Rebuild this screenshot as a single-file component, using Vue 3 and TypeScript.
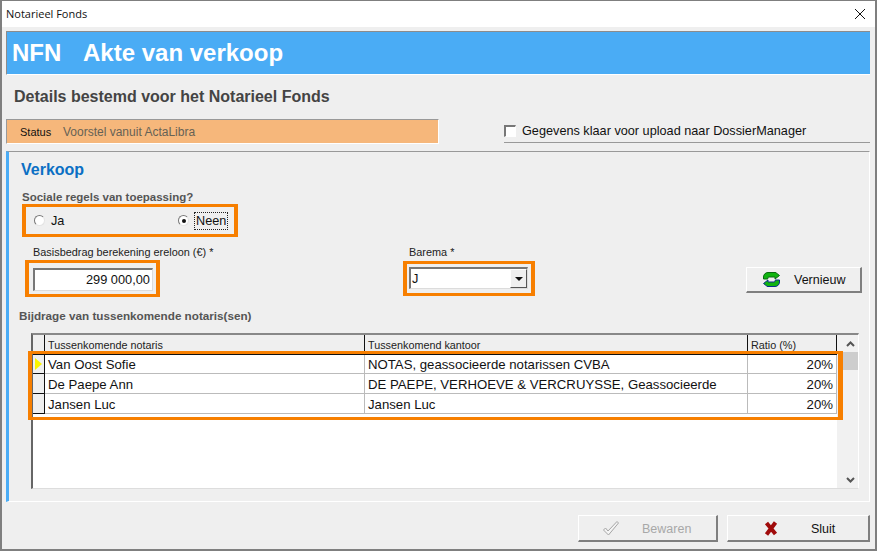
<script setup lang="ts">
interface Row {
  notaris: string
  kantoor: string
  ratio: string
  current?: boolean
}

const rows: Row[] = [
  { notaris: 'Van Oost Sofie', kantoor: 'NOTAS, geassocieerde notarissen CVBA', ratio: '20%', current: true },
  { notaris: 'De Paepe Ann', kantoor: 'DE PAEPE, VERHOEVE & VERCRUYSSE, Geassocieerde', ratio: '20%' },
  { notaris: 'Jansen Luc', kantoor: 'Jansen Luc', ratio: '20%' }
]
</script>

<template>
  <div class="window">
    <div class="titlebar">
      <span>Notarieel Fonds</span>
      <svg class="close" width="10" height="10" viewBox="0 0 10 10">
        <path d="M0 0L10 10M10 0L0 10" stroke="#111" stroke-width="1" fill="none" />
      </svg>
    </div>

    <div class="content">
      <div class="banner">
        <span class="banner-code">NFN</span>
        <span>Akte van verkoop</span>
      </div>

      <h2 class="subtitle">Details bestemd voor het Notarieel Fonds</h2>

      <div class="status-row">
        <div class="status">
          <span class="status-label">Status</span>
          <span class="status-value">Voorstel vanuit ActaLibra</span>
        </div>
        <div class="upload">
          <span class="checkbox"></span>
          <span>Gegevens klaar voor upload naar DossierManager</span>
        </div>
      </div>

      <section class="panel">
        <h3 class="panel-title">Verkoop</h3>
        <div class="field-label social-label">Sociale regels van toepassing?</div>
        <div class="mark radios">
          <label class="radio">
            <span class="radio-dot"></span>
            <span>Ja</span>
          </label>
          <label class="radio radio-neen">
            <span class="radio-dot checked"></span>
            <span class="focused">Neen</span>
          </label>
        </div>

        <div class="form-row">
          <div class="amount-col">
            <div class="small-label">Basisbedrag berekening ereloon (€) *</div>
            <div class="mark amount-mark">
              <div class="input amount">299 000,00</div>
            </div>
          </div>
          <div class="barema-col">
            <div class="small-label">Barema *</div>
            <div class="mark barema-mark">
              <div class="input select">
                <span class="select-value">J</span>
                <span class="select-btn"><i class="caret"></i></span>
              </div>
            </div>
          </div>
          <button class="btn btn-refresh">
            <svg width="17" height="15" viewBox="0 0 17 15">
              <path d="M0.500 7V5C0.500 2.500 2.500 0.500 5 0.500H12V0L16.500 3.500L12 7V5H6C5.200 5 4.800 5.500 4.800 6.200V7Z" fill="#10b410" stroke="#096a12" stroke-width="1" />
              <path d="M16.500 8V10C16.500 12.500 14.500 14.500 12 14.500H5V15L0.500 11.500L5 8V10H11C11.800 10 12.200 9.500 12.200 8.800V8Z" fill="#10b410" stroke="#0a2f8a" stroke-width="1" />
            </svg>
            <span>Vernieuw</span>
          </button>
        </div>

        <div class="field-label grid-label">Bijdrage van tussenkomende notaris(sen)</div>

        <div class="grid">
          <div class="grid-main">
            <div class="grid-row grid-head">
              <div class="cell indicator"></div>
              <div class="cell col-notaris">Tussenkomende notaris</div>
              <div class="cell col-kantoor">Tussenkomend kantoor</div>
              <div class="cell col-ratio">Ratio (%)</div>
            </div>
            <div class="grid-body">
              <div v-for="row in rows" :key="row.notaris" class="grid-row">
                <div class="cell indicator">
                  <i v-if="row.current" class="arrow"></i>
                </div>
                <div class="cell col-notaris">{{ row.notaris }}</div>
                <div class="cell col-kantoor">{{ row.kantoor }}</div>
                <div class="cell col-ratio num">{{ row.ratio }}</div>
              </div>
              <div class="rows-mark"></div>
            </div>
          </div>
          <div class="scrollbar">
            <svg width="9" height="6" viewBox="0 0 9 6"><path d="M1 5L4.500 1.500L8 5" stroke="#555" stroke-width="2" fill="none" /></svg>
            <div class="thumb"></div>
            <div class="track"></div>
            <svg width="9" height="6" viewBox="0 0 9 6"><path d="M1 1L4.500 4.500L8 1" stroke="#555" stroke-width="2" fill="none" /></svg>
          </div>
        </div>
      </section>

      <div class="footer">
        <button class="btn btn-save" disabled>
          <svg width="16" height="15" viewBox="0 0 16 15">
            <path d="M0.500 9L2.500 7L5 10L14 0.500L15.500 2L5.500 14Z" fill="#f4f4f4" stroke="#a5a5a5" stroke-width="1" />
          </svg>
          <span>Bewaren</span>
        </button>
        <button class="btn btn-close">
          <svg width="14" height="15" viewBox="0 0 14 15">
            <path d="M2.500 2L11.500 13M11.500 1.500L2.500 13.500" stroke="#a00b0b" stroke-width="4" fill="none" />
          </svg>
          <span>Sluit</span>
        </button>
      </div>
    </div>
  </div>
</template>

<style>
html,
body {
  margin: 0;
  background: #efefef;
}
</style>

<style scoped>
.window {
  box-sizing: border-box;
  width: 877px;
  height: 551px;
  border: 1px solid #7f7f7f;
  border-width: 1px 2px 2px 2px;
  background: #efefef;
  font-family: "Liberation Sans", Arial, sans-serif;
  color: #111;
  overflow: hidden;
}

.titlebar {
  box-sizing: border-box;
  height: 26px;
  background: #fff;
  display: flex;
  align-items: center;
  justify-content: space-between;
  padding: 0 10px 1px 4px;
  font-family: "Open Sans", sans-serif;
  font-size: 11px;
}

.close {
  margin-top: 1px;
}

.content {
  padding: 4px 5px 0 4px;
}

.banner {
  box-sizing: border-box;
  height: 44px;
  background: #4aacf5;
  border-top: 1px solid #8c8c8c;
  border-left: 1px solid #8c8c8c;
  border-bottom: 1px solid #fff;
  display: flex;
  align-items: center;
  padding-left: 5px;
  color: #fff;
  font-size: 24px;
  font-weight: 700;
}

.banner-code {
  width: 71px;
}

.subtitle {
  margin: 13px 0 0 8px;
  height: 18px;
  line-height: 18px;
  font-size: 16px;
  font-weight: 700;
  color: #444;
}

.status-row {
  display: flex;
  align-items: flex-start;
  margin-top: 13px;
  height: 32px;
}

.status {
  box-sizing: border-box;
  width: 433px;
  height: 25px;
  background: #f6b77b;
  border-top: 1px solid #999;
  border-left: 1px solid #999;
  border-right: 1px solid #fff;
  border-bottom: 1px solid #fff;
  display: flex;
  align-items: center;
  font-size: 11px;
  padding-left: 13px;
}

.status-label {
  width: 43px;
}

.status-value {
  color: #666255;
  font-size: 12px;
}

.upload {
  box-sizing: border-box;
  width: 366px;
  height: 24px;
  margin-left: 65px;
  border-bottom: 1px solid #999;
  display: flex;
  align-items: center;
  gap: 6px;
  font-size: 12.7px;
}

.checkbox {
  box-sizing: border-box;
  width: 12px;
  height: 12px;
  background: #fff;
  border-top: 2px solid #777;
  border-left: 2px solid #777;
  border-right: 1px solid #fff;
  border-bottom: 1px solid #fff;
}

.panel {
  box-sizing: border-box;
  height: 351px;
  border-top: 1px solid #999;
  border-left: 3px solid #4aacf5;
  border-right: 1px solid #fff;
  border-bottom: 1px solid #fff;
  padding-left: 12px;
}

.panel-title {
  margin: 9px 0 0;
  height: 18px;
  line-height: 18px;
  font-size: 16px;
  font-weight: 700;
  color: #0b6fc4;
}

.field-label {
  font-size: 11.7px;
  font-weight: 700;
  color: #555;
  line-height: 13px;
}

.social-label {
  margin: 12px 0 0 1px;
  font-size: 11.5px;
}

.mark {
  box-sizing: border-box;
  border: 3px solid #f77f00;
  border-left-width: 4px;
  border-right-width: 4px;
}

.radios {
  width: 216px;
  height: 33px;
  margin: 0 0 0 1px;
  display: flex;
  align-items: center;
  padding-left: 8px;
  font-size: 12.7px;
}

.radio {
  display: flex;
  align-items: center;
  gap: 6px;
  width: 144px;
}

.radio-neen {
  width: auto;
}

.radio-dot {
  box-sizing: border-box;
  width: 11px;
  height: 11px;
  border-radius: 50%;
  background: #fff;
  border: 1px solid;
  border-color: #777 #e4e4e4 #e4e4e4 #777;
  display: flex;
  align-items: center;
  justify-content: center;
}

.radio-dot.checked::after {
  content: "";
  width: 4px;
  height: 4px;
  border-radius: 50%;
  background: #111;
}

.focused {
  outline: 1px dotted #222;
  padding: 0 1px;
  line-height: 16px;
}

.form-row {
  display: flex;
  margin-top: 9px;
  height: 63px;
}

.small-label {
  font-size: 10.9px;
  line-height: 13px;
  color: #222;
}

.amount-col {
  width: 378px;
  padding-left: 12px;
  box-sizing: border-box;
}

.amount-mark {
  width: 135px;
  height: 37px;
  margin: 1px 0 0 -8px;
  padding: 5px 3px 0 4px;
}

.input {
  box-sizing: border-box;
  background: #fff;
  border-top: 2px solid #777;
  border-left: 2px solid #777;
  border-right: 1px solid #dcdcdc;
  border-bottom: 1px solid #dcdcdc;
  font-size: 12.8px;
}

.amount {
  height: 23px;
  line-height: 19px;
  text-align: right;
  padding-right: 2px;
}

.barema-col {
  width: 347px;
  padding-left: 10px;
  box-sizing: border-box;
}

.barema-mark {
  width: 132px;
  height: 35px;
  margin: 2px 0 0 -6px;
  padding: 3px 3px 0 2px;
}

.select {
  height: 22px;
  display: flex;
  align-items: stretch;
  justify-content: space-between;
}

.select-value {
  padding-left: 1px;
  line-height: 19px;
}

.select-btn {
  box-sizing: border-box;
  width: 17px;
  background: #efefef;
  border-right: 1px solid #555;
  border-bottom: 1px solid #555;
  border-left: 1px solid #fff;
  border-top: 1px solid #fff;
  display: flex;
  align-items: center;
  justify-content: center;
}

.caret {
  width: 0;
  height: 0;
  border-left: 4px solid transparent;
  border-right: 4px solid transparent;
  border-top: 4px solid #111;
}

.btn {
  box-sizing: border-box;
  height: 27px;
  padding: 0;
  background: #efefef;
  border-top: 1px solid #fff;
  border-left: 1px solid #fff;
  border-right: 2px solid #7f7f7f;
  border-bottom: 2px solid #7f7f7f;
  display: flex;
  align-items: center;
  font-family: "Liberation Sans", Arial, sans-serif;
  font-size: 12.5px;
  color: #111;
}

.btn span {
  padding-top: 1px;
}

.btn-refresh {
  width: 116px;
  height: 26px;
  margin-top: 21px;
  padding-left: 16px;
  gap: 14px;
}

.grid-label {
  margin-left: -2px;
  height: 24px;
}

.grid {
  display: flex;
  width: 828px;
  height: 156px;
  margin-left: 10px;
  box-sizing: border-box;
  border-top: 2px solid #888;
  border-left: 2px solid #666;
  border-right: 1px solid #fff;
  border-bottom: 1px solid #ddd;
}

.grid-main {
  width: 804px;
  display: flex;
  flex-direction: column;
}

.grid-row {
  box-sizing: border-box;
  display: flex;
  height: 20px;
  font-size: 13.2px;
}

.grid-body .grid-row:first-child {
  height: 19px;
}

.grid-body .grid-row + .grid-row .cell {
  padding-top: 1px;
}

.grid-head {
  font-size: 10.8px;
  color: #222;
  border-bottom: 1px solid #111;
}

.grid-body {
  position: relative;
  flex: 1;
  background: #fff;
}

.cell {
  box-sizing: border-box;
  display: flex;
  align-items: center;
  padding: 0 3px;
  white-space: nowrap;
  overflow: hidden;
  border-right: 1px solid #bbb;
  border-bottom: 1px solid #bbb;
}

.grid-head .cell {
  border-bottom: 0;
  border-right: 1px solid #111;
}

.indicator {
  width: 12px;
  padding: 0 0 0 2px;
  background: #efefef;
  border-right: 1px solid #111;
  border-bottom-color: #111;
}

.col-notaris {
  width: 320px;
}

.col-kantoor {
  width: 383px;
}

.col-ratio {
  width: 89px;
}

.num {
  justify-content: flex-end;
  padding-right: 3px;
}

.arrow {
  width: 0;
  height: 0;
  border-top: 6px solid transparent;
  border-bottom: 6px solid transparent;
  border-left: 7px solid #fbf500;
}

.rows-mark {
  position: absolute;
  left: -5px;
  top: -4px;
  width: 815px;
  height: 69px;
  box-sizing: border-box;
  border: 3px solid #f77f00;
  border-left-width: 4px;
  border-right-width: 5px;
  pointer-events: none;
}

.scrollbar {
  flex: 1;
  background: #f1f1f1;
  display: flex;
  flex-direction: column;
  align-items: center;
  padding: 6px 0 5px 5px;
}

.thumb {
  width: 100%;
  height: 18px;
  margin-top: 5px;
  background: #cdcdcd;
}

.track {
  flex: 1;
}

.footer {
  display: flex;
  justify-content: flex-end;
  gap: 9px;
  margin-top: 13px;
}

.btn-save {
  width: 140px;
  padding-left: 24px;
  gap: 23px;
  color: #a8a8a8;
}

.btn-close {
  width: 143px;
  padding-left: 36px;
  gap: 33px;
}
</style>
